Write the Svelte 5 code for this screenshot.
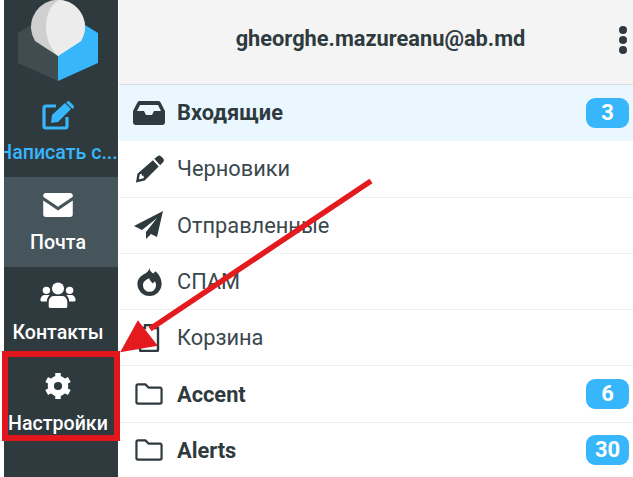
<script>
  const navItems = [
    { label: 'Написать с...', icon: 'compose', cls: 'compose' },
    { label: 'Почта', icon: 'mail', cls: 'active' },
    { label: 'Контакты', icon: 'users', cls: '' },
    { label: 'Настройки', icon: 'gear', cls: '' }
  ];

  const folders = [
    { name: 'Входящие', icon: 'inbox', count: 3, selected: true },
    { name: 'Черновики', icon: 'pencil' },
    { name: 'Отправленные', icon: 'plane' },
    { name: 'СПАМ', icon: 'fire' },
    { name: 'Корзина', icon: 'trash' },
    { name: 'Accent', icon: 'folder', count: 6, unread: true },
    { name: 'Alerts', icon: 'folder', count: 30, unread: true }
  ];
</script>

{#snippet navIcon(name)}
  {#if name === 'compose'}
    <svg width="33" height="30" viewBox="0 0 33 30">
      <path d="M14 6H4a2 2 0 0 0-2 2v18a2 2 0 0 0 2 2h19a2 2 0 0 0 2-2v-9" fill="none" stroke="currentColor" stroke-width="3.2"/>
      <path d="M10 15 23 3l6 6-13 13-7 1z" fill="currentColor"/>
      <path d="M25 1.500a2 2 0 0 1 2.500 0l4 4a2 2 0 0 1 0 2.500L30.500 9l-6-6z" fill="currentColor"/>
    </svg>
  {:else if name === 'mail'}
    <svg width="30" height="24" viewBox="0 0 32 26">
      <path d="M3 0h26a3 3 0 0 1 3 3v1L16 15 0 4V3a3 3 0 0 1 3-3z" fill="currentColor"/>
      <path d="M0 8l16 11L32 8v15a3 3 0 0 1-3 3H3a3 3 0 0 1-3-3z" fill="currentColor"/>
    </svg>
  {:else if name === 'users'}
    <svg width="36" height="26" viewBox="0 0 38 28">
      <circle cx="19" cy="7" r="6.500" fill="currentColor"/>
      <circle cx="6.500" cy="9" r="4" fill="currentColor"/>
      <circle cx="31.500" cy="9" r="4" fill="currentColor"/>
      <path d="M9 26v-4c0-5 3-7 6-7h8c3 0 6 2 6 7v4a2 2 0 0 1-2 2H11a2 2 0 0 1-2-2z" fill="currentColor"/>
      <path d="M0 20c0-4 2-6 5-6h5c-2 2-3 4-3 7H2a2 2 0 0 1-2-1zM38 20c0-4-2-6-5-6h-5c2 2 3 4 3 7h5a2 2 0 0 0 2-1z" fill="currentColor"/>
    </svg>
  {:else}
    <svg width="28" height="28" viewBox="0 0 28 28">
      <circle cx="14" cy="14" r="7.200" fill="none" stroke="currentColor" stroke-width="6.200"/>
      <g stroke="currentColor" stroke-width="5.500">
        <path d="M14 1v6M14 21v6M2.700 7.500l5.200 3M20.100 17.500l5.200 3M2.700 20.500l5.200-3M20.100 10.500l5.200-3"/>
      </g>
    </svg>
  {/if}
{/snippet}

{#snippet folderIcon(name)}
  {#if name === 'inbox'}
    <svg width="32" height="24" viewBox="0 0 32 24">
      <path d="M7 0h18a3 3 0 0 1 2.600 1.400L32 10v11a3 3 0 0 1-3 3H3a3 3 0 0 1-3-3V10l4.400-8.600A3 3 0 0 1 7 0zm0 4-3 6h7l2 4h6l2-4h7l-3-6z" fill="currentColor" fill-rule="evenodd"/>
    </svg>
  {:else if name === 'pencil'}
    <svg width="29" height="28" viewBox="0 0 30 28">
      <path d="M20 3.500 23 1a3 3 0 0 1 4 0l2 2a3 3 0 0 1 0 4l-3 3z" fill="currentColor"/>
      <path d="M18.500 5 24.500 11.500 10 26 1 28l1.500-9zM5 19.500l-1 5 5-1 0-2.500-2 0 0-2z" fill="currentColor" fill-rule="evenodd"/>
    </svg>
  {:else if name === 'plane'}
    <svg width="30" height="28" viewBox="0 0 30 28">
      <path d="M29 0 0 15l8 4 15-12-11 14v7l5-5 6 3z" fill="currentColor"/>
    </svg>
  {:else if name === 'fire'}
    <svg width="25" height="28" viewBox="0 0 26 30">
      <path d="M13 0c0 3 2 4.500 4 6l2.500-2.500C23 6.500 26 11.500 26 17a13 13 0 0 1-26 0C0 11 5 7.500 8.500 6 10.500 4.500 12.500 3 13 0zM12.500 11C10 12.500 6 14 6 18.500a7 7 0 0 0 14 0c0-1.500-.4-3-1.200-4.200L16.500 16.500C15 15 13.500 13.500 12.500 11z" fill="currentColor" fill-rule="evenodd"/>
    </svg>
  {:else if name === 'trash'}
    <svg width="22" height="28" viewBox="0 0 22 28">
      <path d="M7 1h8v3h5v22a1 1 0 0 1-1 1H3a1 1 0 0 1-1-1V4h5z" fill="none" stroke="currentColor" stroke-width="2.400"/>
    </svg>
  {:else}
    <svg width="28" height="22" viewBox="0 0 30 24">
      <path d="M3 1.500h8l3.500 3.500H27a1.700 1.700 0 0 1 1.700 1.700v14a1.700 1.700 0 0 1-1.700 1.700H3a1.700 1.700 0 0 1-1.700-1.700V3.200A1.700 1.700 0 0 1 3 1.500z" fill="none" stroke="currentColor" stroke-width="2.400" stroke-linejoin="round"/>
    </svg>
  {/if}
{/snippet}

<div class="page">
  <aside class="sidebar">
    <div class="logo">
      <svg width="80" height="82" viewBox="0 0 80 82">
        <path d="M13 25 0 33v30l40 18V50z" fill="#3f4d51"/>
        <path d="M67 25l13 8v30L40 81V50z" fill="#37b6fb"/>
        <path d="M40 56 17 41A27 27 0 1 1 67 27c0 6-2 10-4 14z" fill="#cfcfcf"/>
        <path d="M41 0C32 5 28 16 28 27c0 11 4 21 12 29l23-15c2-4 4-8 4-14A27 27 0 0 0 41 0z" fill="#ececec"/>
      </svg>
    </div>
    {#each navItems as item}
      <div class="nav-item {item.cls}">
        <span class="nav-icon">{@render navIcon(item.icon)}</span>
        <span class="nav-label">{item.label}</span>
      </div>
    {/each}
  </aside>

  <main class="content">
    <header class="topbar">
      <span class="account">gheorghe.mazureanu@ab.md</span>
      <span class="dots"><i></i><i></i><i></i></span>
    </header>
    <ul class="folders">
      {#each folders as folder}
        <li class:selected={folder.selected} class:unread={folder.unread || folder.selected}>
          <span class="folder-icon">{@render folderIcon(folder.icon)}</span>
          <span class="folder-name">{folder.name}</span>
          {#if folder.count}<span class="badge">{folder.count}</span>{/if}
        </li>
      {/each}
    </ul>
  </main>

  <!-- annotation laid over the screenshot -->
  <div class="highlight"></div>
  <svg class="arrow" width="633" height="477" viewBox="0 0 633 477">
    <line x1="371" y1="181" x2="150" y2="329" stroke="#e31b1f" stroke-width="5.500"/>
    <path d="M122 351 138 322 156 345z" fill="#e31b1f" stroke="#e31b1f" stroke-width="2"/>
  </svg>
</div>

<style>
  :global(body) {
    margin: 0;
    background: #fff;
  }

  .page {
    position: relative;
    display: flex;
    width: 633px;
    height: 477px;
    overflow: hidden;
    font-family: Roboto, sans-serif;
    background: #fff;
  }

  .sidebar {
    flex: none;
    width: 114px;
    margin-left: 4px;
    background: #2f3a3f;
    display: flex;
    flex-direction: column;
    overflow: hidden;
  }

  .logo {
    height: 88px;
    padding-left: 14px;
    display: flex;
  }

  .nav-item {
    flex: none;
    height: 90px;
    padding-right: 6px;
    display: flex;
    flex-direction: column;
    align-items: center;
    color: #fff;
  }

  .nav-item.active {
    background: #45555b;
  }

  .nav-item.compose {
    color: #37b6fb;
    height: 89px;
  }

  .nav-item.compose .nav-icon {
    margin-top: 5px;
    margin-bottom: 4px;
  }

  .nav-item:last-child {
    padding-top: 1px;
  }

  .nav-icon {
    height: 44px;
    margin-top: 6px;
    margin-bottom: 4px;
    display: flex;
    align-items: center;
    justify-content: center;
  }

  .nav-label {
    font-size: 19.600px;
    font-weight: 500;
    line-height: 24px;
    white-space: nowrap;
  }

  .content {
    flex: 1;
    margin-left: 1px;
    min-width: 0;
  }

  .topbar {
    height: 84px;
    background: #f4f4f4;
    border-bottom: 1px solid #d8dde0;
    display: flex;
    align-items: center;
    justify-content: center;
    position: relative;
    color: #2f3a3f;
  }

  .account {
    font-size: 21.800px;
    font-weight: 700;
    margin-left: 9px;
    margin-bottom: 7px;
  }

  .dots {
    position: absolute;
    right: 6px;
    top: 26px;
    display: flex;
    flex-direction: column;
    gap: 2px;
  }

  .dots i {
    display: block;
    width: 8px;
    height: 8px;
    border-radius: 50%;
    background: #2f3a3f;
  }

  .folders {
    list-style: none;
    margin: 0;
    padding: 0;
  }

  .folders li {
    height: 56.300px;
    box-sizing: border-box;
    border-bottom: 1px solid #f0f0f0;
    display: flex;
    align-items: center;
    padding: 0 4px 0 14px;
    color: #3a474d;
    font-size: 21.800px;
  }

  .folders li.selected {
    background: #ebf7ff;
    border-bottom-color: #ebf7ff;
  }

  .folders li.unread {
    font-weight: 700;
    color: #2f3a3f;
  }

  .folder-icon {
    width: 32px;
    margin-right: 12px;
    flex: none;
    display: flex;
    justify-content: center;
    color: #2f3a3f;
  }

  .folder-name {
    flex: 1;
  }

  .badge {
    width: 43px;
    height: 30px;
    line-height: 30px;
    text-align: center;
    border-radius: 9px;
    background: #37b6fb;
    color: #fff;
    font-size: 22px;
    font-weight: 700;
  }

  .highlight {
    position: absolute;
    left: 2px;
    top: 351px;
    width: 106px;
    height: 78px;
    border: 6px solid #e3171b;
  }

  .arrow {
    position: absolute;
    left: 0;
    top: 0;
    pointer-events: none;
  }
</style>
